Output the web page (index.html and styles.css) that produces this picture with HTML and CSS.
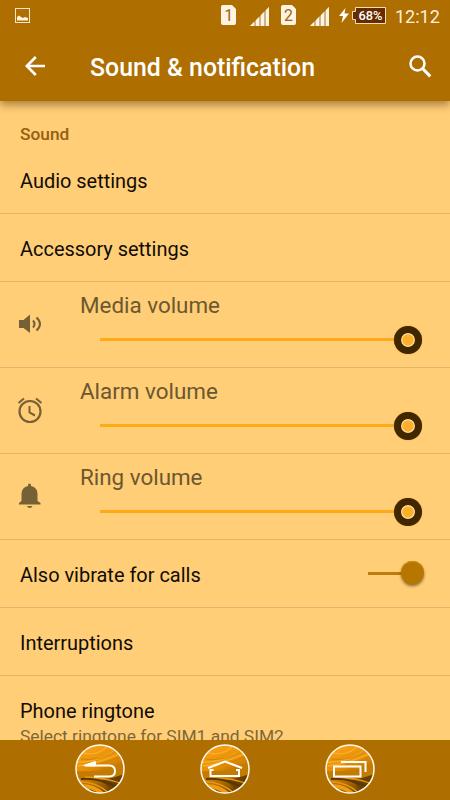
FILE: index.html
```html
<!DOCTYPE html>
<html lang="en">
<head>
<meta charset="utf-8">
<title>Sound &amp; notification</title>
<link rel="stylesheet" href="styles.css">
</head>
<body>
<svg class="defs" width="0" height="0" aria-hidden="true">
  <defs>
    <linearGradient id="gold" x1="0.2" y1="0" x2="0.65" y2="1">
      <stop offset="0" stop-color="#f9a51a"/><stop offset=".45" stop-color="#e38d05"/><stop offset=".7" stop-color="#ba7000"/><stop offset="1" stop-color="#6b4000"/>
    </linearGradient>
    <clipPath id="disc"><circle cx="25" cy="25" r="23.5"/></clipPath>
    <g id="navdisc">
      <circle cx="25" cy="25" r="24" fill="url(#gold)"/>
      <g clip-path="url(#disc)" fill="none">
        <path d="M0 18Q20 20 43 5M3 22Q22 20 46 9M8 9Q22 12 32 3" stroke="#ffb52d" stroke-width="1.5" opacity=".7"/>
        <path d="M6 15Q25 18 42 6M20 21Q34 18 48 12M25 25Q38 23 50 18" stroke="#c67d05" stroke-width="1" opacity=".7"/>
        <path d="M0 27Q28 29 50 19L50 36Q37 32 0 35" fill="#c47b02"/>
        <path d="M24 37Q36 35 50 30V50H38Q36 42 24 37" fill="#684000"/>
        <path d="M6 35Q22 33 45 44" stroke="#5a3600" stroke-width="2"/>
        <path d="M0 38Q20 36 35 50M10 33Q28 33 48 40" stroke="#e69616" stroke-width="1.3"/>
        <path d="M3 43Q16 40 28 50" stroke="#f09c12" stroke-width="4"/>
      </g>
      <circle cx="25" cy="25" r="24" fill="none" stroke="#fff8ea" stroke-width="1.5"/>
    </g>
    <g id="signal">
      <path d="M0 19L19 0V19Z" fill="#d3b287"/>
      <path d="M0 19L4 15V19ZM6 13L9 10V19H6ZM11 8L14 5V19H11ZM16 3L19 0V19H16Z" fill="#fff3df"/>
    </g>
    <g id="sim"><path d="M2 0H11L15 4V18Q15 20 13 20H2Q0 20 0 18V2Q0 0 2 0Z" fill="#fff3e3"/></g>
  </defs>
</svg>
<div class="screen">
  <header class="top">
    <div class="status">
      <svg class="picture" width="15" height="15" viewBox="0 0 15 15"><rect x=".5" y=".5" width="14" height="14" fill="none" stroke="#f7e5ca"/><path d="M2 12.5V9L4 7.5L6 9L8 10L10 9L13 10V12.5Z" fill="#fff3df"/></svg>
      <svg class="sim-one" width="15" height="20"><use href="#sim"/><text x="7.7" y="16">1</text></svg>
      <svg class="signal-one" width="19" height="19"><use href="#signal"/></svg>
      <svg class="sim-two" width="15" height="20"><use href="#sim"/><text x="7.5" y="16">2</text></svg>
      <svg class="signal-two" width="19" height="19"><use href="#signal"/></svg>
      <svg class="bolt" width="10" height="15" viewBox="0 0 10 15"><path d="M6.5 0L0 8H4L2.5 15L10 5.5H5.5Z" fill="#fff"/></svg>
      <svg class="battery" width="34" height="17" viewBox="0 0 34 17"><path d="M3.5 .5H33.5V16.5H3.5V12.5H.5V4.5H3.5Z" fill="#672b00" stroke="#f8dfba"/><text x="18.5" y="13">68%</text></svg>
      <span class="clock">12:12</span>
    </div>
    <div class="toolbar">
      <svg class="back" width="20" height="20" viewBox="0 0 20 20"><path d="M10.8 1L1.8 10L10.8 19M2 10H20" fill="none" stroke="#fff" stroke-width="2.6"/></svg>
      <h1>Sound &amp; notification</h1>
      <svg class="search" width="23" height="23" viewBox="0 0 23 23"><circle cx="8.5" cy="8.5" r="7" fill="none" stroke="#fff" stroke-width="2.5"/><path d="M13.5 13.5L21.3 21.3" stroke="#fff" stroke-width="3.1"/></svg>
    </div>
  </header>
  <main class="list">
    <h2>Sound</h2>
    <div class="row">Audio settings</div>
    <div class="row accessory">Accessory settings</div>
    <div class="volume">
      <svg class="volume-icon" width="26" height="28" viewBox="0 0 26 28"><path d="M2 10H6.5L13 4.5V23L6.5 18H2Z" fill="#766036"/><path d="M16 10.5Q19 14 16 17.5M19.5 7.5Q26.5 14 19.5 20.5" fill="none" stroke="#766036" stroke-width="2.1"/></svg>
      <div class="control"><span>Media volume</span><div class="slider"><i></i></div></div>
    </div>
    <div class="volume">
      <svg class="volume-icon" width="26" height="28" viewBox="0 0 26 28"><circle cx="13" cy="15.5" r="10.5" fill="none" stroke="#766036" stroke-width="2.2"/><path d="M1.5 7L7 2.5M24.5 7L19 2.5M12.5 10V16.5L18 19.5" fill="none" stroke="#766036" stroke-width="2"/></svg>
      <div class="control"><span>Alarm volume</span><div class="slider"><i></i></div></div>
    </div>
    <div class="volume">
      <svg class="volume-icon" width="26" height="28" viewBox="0 0 26 28"><path d="M11 4V3Q11 1.5 12.5 1.5T14 3V4Q20.5 5.5 20.5 12V19L23.5 21V22.5H2V21L4.5 19V12Q4.5 5.5 11 4ZM10 24H15.5Q14.8 26 12.7 26T10 24Z" fill="#766036"/></svg>
      <div class="control"><span>Ring volume</span><div class="slider"><i></i></div></div>
    </div>
    <div class="row vibrate"><span>Also vibrate for calls</span><div class="switch"><i></i></div></div>
    <div class="row">Interruptions</div>
    <div class="ringtone"><p class="name">Phone ringtone</p><p class="summary">Select ringtone for SIM1 and SIM2</p></div>
  </main>
  <nav class="nav">
    <svg width="50" height="50"><use href="#navdisc"/><path d="M19 32.5H34Q40 32.5 40 27T34 21.5H10L20 18.5V21" fill="none" stroke="#fff" stroke-width="2"/><path d="M7 22L20 17V22.5Z" fill="#fff"/></svg>
    <svg width="50" height="50"><use href="#navdisc"/><path d="M8 24L25 17.5L42 24M13.5 26H10.5V32H39V26H36" fill="none" stroke="#fff" stroke-width="2"/></svg>
    <svg width="50" height="50"><use href="#navdisc"/><path d="M9 22.5H35.5V32.5H9ZM16 18H40.5V28" fill="none" stroke="#fff" stroke-width="2"/></svg>
  </nav>
</div>
</body>
</html>
```
FILE: styles.css
```css
* { box-sizing: border-box; }
body { margin: 0; font-family: Roboto, "Liberation Sans", sans-serif; }
h1, h2, p { margin: 0; }
.defs { position: absolute; }
svg { display: block; flex: none; }
.screen { width: 450px; height: 800px; display: flex; flex-direction: column; overflow: hidden; background: #ffce76; }
.top { position: relative; z-index: 1; height: 101px; flex: none; background: #ae6e00; box-shadow: 0 4px 8px rgba(70,40,0,.46); }
.status { height: 32px; display: flex; align-items: flex-start; padding: 5px 10px 0 15px; }
.picture { margin-top: 3px; margin-right: 191px; }
.signal-one, .signal-two { margin-top: 2px; }
.signal-one { margin-left: 14px; margin-right: 12px; }
.signal-two { margin-left: 14px; margin-right: 10px; }
.sim-one text, .sim-two text { font: 400 16px Roboto, sans-serif; text-anchor: middle; fill: #a0640c; }
.bolt { margin-top: 3px; margin-right: 3px; }
.battery { margin-top: 2px; }
.battery text { font: 500 12.8px Roboto, sans-serif; text-anchor: middle; fill: #fff; }
.clock { margin-left: 9px; color: #fff0dc; font-size: 18px; line-height: 23px; white-space: nowrap; }
.toolbar { height: 68px; display: flex; align-items: center; padding-left: 25px; }
h1 { width: 318.5px; margin-left: 45px; padding-top: 4px; color: #fff; font-size: 24.85px; font-weight: 500; line-height: 30px; white-space: nowrap; }
.list { height: 639px; flex: none; overflow: hidden; }
h2 { height: 45px; padding: 23px 20px 0; color: #946011; font-size: 17.3px; font-weight: 500; line-height: 20px; }
.row { height: 68px; border-bottom: 1px solid #e0b66a; padding: 2px 20px 0; display: flex; align-items: center; color: #100c06; font-size: 19.95px; }
.volume { height: 86px; border-bottom: 1px solid #e0b66a; padding-left: 17px; display: flex; }
.volume-icon { margin-top: 28px; }
.control { width: 342px; margin-left: 37px; padding-top: 8px; color: #6c5730; font-size: 22.4px; line-height: 30px; }
.control span { display: block; }
.slider { width: 308px; height: 3px; margin: 18px 0 0 20px; background: #ffa916; display: flex; align-items: center; justify-content: flex-end; }
.slider i { width: 28px; height: 28px; flex: none; margin-right: -14px; border: 7px solid #402700; border-radius: 50%; background: #ffb02b; box-shadow: inset 0 0 0 1.2px #ffe2ae, 0 0 1px #bd7900; }
.vibrate { justify-content: space-between; padding-right: 25px; }
.switch { width: 57px; height: 3px; margin-bottom: 3px; background: linear-gradient(90deg, #bc7c0c 80%, transparent 80%); display: flex; align-items: center; justify-content: flex-end; }
.switch i { width: 23px; height: 23px; flex: none; margin-right: 1px; margin-bottom: 1px; border-radius: 50%; background: #b67600; box-shadow: inset 0 1px 1px #ce8b12, 0 2px 3px rgba(90,50,0,.65); }
.ringtone { height: 100px; padding: 23px 20px 0; }
.name { color: #100c06; font-size: 19.95px; line-height: 25px; }
.summary { color: #806636; font-size: 17.4px; line-height: 24px; white-space: nowrap; }
.nav { height: 60px; flex: none; background: #ae6e00; display: flex; gap: 75px; justify-content: center; padding-top: 4px; }
```
